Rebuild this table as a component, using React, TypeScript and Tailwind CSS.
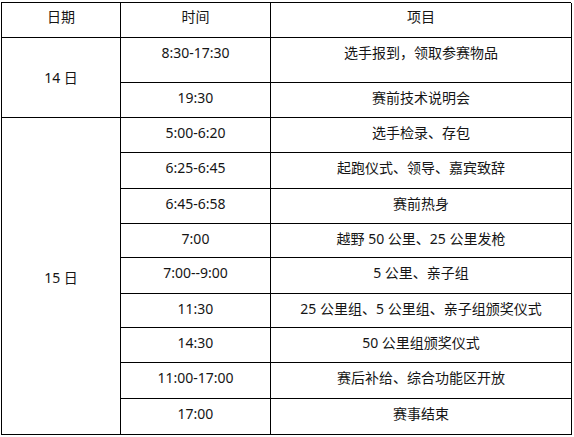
import React from "react";

const rows: { time: string; item: string; h: number }[] = [
  { time: "8:30-17:30", item: "选手报到，领取参赛物品", h: 45 },
  { time: "19:30", item: "赛前技术说明会", h: 35 },
  { time: "5:00-6:20", item: "选手检录、存包", h: 35 },
  { time: "6:25-6:45", item: "起跑仪式、领导、嘉宾致辞", h: 36 },
  { time: "6:45-6:58", item: "赛前热身", h: 35 },
  { time: "7:00", item: "越野 50 公里、25 公里发枪", h: 34 },
  { time: "7:00--9:00", item: "5 公里、亲子组", h: 36 },
  { time: "11:30", item: "25 公里组、5 公里组、亲子组颁奖仪式", h: 34 },
  { time: "14:30", item: "50 公里组颁奖仪式", h: 35 },
  { time: "11:00-17:00", item: "赛后补给、综合功能区开放", h: 36 },
  { time: "17:00", item: "赛事结束", h: 36 },
];

export default function App() {
  return (
    <div
      className="w-[574px] h-[437px] overflow-hidden bg-white pt-[2px] pl-[1px] text-[14px] leading-[20px] text-[#151515]"
      style={{ fontFamily: '"Noto Sans", "Noto Sans CJK SC", sans-serif' }}
    >
      <div className="grid w-[570px] grid-cols-[119px_150px_301px] grid-rows-[35px_45px_35px_35px_36px_35px_34px_36px_34px_35px_36px_36px] border-l border-t border-black">
        <div className="border-r border-b border-black text-center pt-[4px]">日期</div>
        <div className="border-r border-b border-black text-center pt-[4px]">时间</div>
        <div className="border-r border-b border-black text-center pt-[4px]">项目</div>

        <div className="row-span-2 border-r border-b border-black flex items-center justify-center">
          14 日
        </div>
        <div className="border-r border-b border-black text-center pt-[5px]">{rows[0].time}</div>
        <div className="border-r border-b border-black text-center pt-[5px]">{rows[0].item}</div>
        <div className="border-r border-b border-black text-center pt-[5px]">{rows[1].time}</div>
        <div className="border-r border-b border-black text-center pt-[5px]">{rows[1].item}</div>

        <div className="row-span-9 border-r border-b border-black flex items-center justify-center pt-[3px]">
          15 日
        </div>
        {rows.slice(2).map((r) => (
          <React.Fragment key={r.time}>
            <div className="border-r border-b border-black text-center pt-[5px]">{r.time}</div>
            <div className="border-r border-b border-black text-center pt-[5px]">{r.item}</div>
          </React.Fragment>
        ))}
      </div>
    </div>
  );
}
